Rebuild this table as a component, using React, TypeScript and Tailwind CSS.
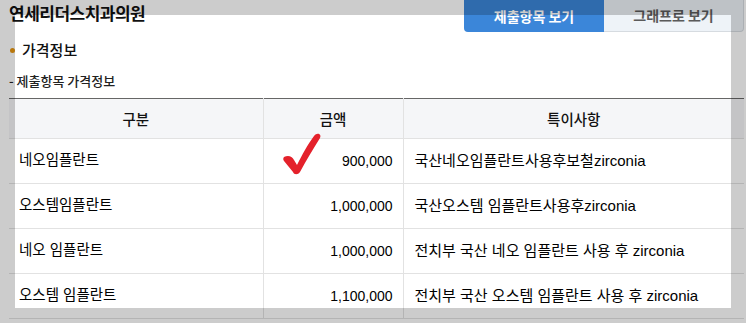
import React from "react";

const rows = [
  { name: "네오임플란트", price: "900,000", note: "국산네오임플란트사용후보철zirconia" },
  { name: "오스템임플란트", price: "1,000,000", note: "국산오스템 임플란트사용후zirconia" },
  { name: "네오 임플란트", price: "1,000,000", note: "전치부 국산 네오 임플란트 사용 후 zirconia" },
  { name: "오스템 임플란트", price: "1,100,000", note: "전치부 국산 오스템 임플란트 사용 후 zirconia" },
];

export default function App() {
  return (
    <div
      className="relative w-[746px] h-[323px] overflow-hidden bg-white text-[#222]"
      style={{ fontFamily: '"Noto Sans CJK KR", "Noto Sans", sans-serif' }}
    >
      <div className="pl-[9px]">
        <div className="flex items-start justify-between h-[32px]">
          <div className="pt-[1px] text-[17px] font-bold leading-[24px] tracking-[-0.5px] text-[#111]">
            연세리더스치과의원
          </div>
          <div className="flex mr-[2px]">
            <div className="w-[140px] h-[32px] flex items-center justify-center bg-[#3b86d9] text-white text-[14px] font-bold rounded-bl-[4px]">
              제출항목 보기
            </div>
            <div className="w-[140px] h-[32px] flex items-center justify-center bg-[#eef3f8] text-[#5a5a5a] text-[14px] font-bold border border-t-0 border-l-0 border-[#d6dbe0] rounded-br-[4px]">
              그래프로 보기
            </div>
          </div>
        </div>
        <div className="mt-[9px] flex items-center h-[18px]">
          <span className="w-[5px] h-[5px] rounded-full bg-[#e6950f] ml-[1px]" />
          <span className="ml-[7px] text-[15px] leading-[18px] text-[#111] font-medium">가격정보</span>
        </div>
        <div className="mt-[14px] text-[13px] leading-[16px] font-medium text-[#222]">- 제출항목 가격정보</div>
        <table
          className="mt-[9px] w-[735px] border-collapse border-t border-[#666] text-[14px]"
          style={{ fontFamily: '"Liberation Sans", "Noto Sans CJK KR", sans-serif' }}
        >
          <thead>
            <tr className="h-[40px] bg-[#f5f6f8]">
              <th className="w-[254px] font-medium text-[14.5px] text-center border-b border-r border-[#e2e2e2] text-[#111]" style={{ fontFamily: '"Noto Sans CJK KR", sans-serif' }}>구분</th>
              <th className="w-[140px] font-medium text-[14.5px] text-center border-b border-r border-[#e2e2e2] text-[#111]" style={{ fontFamily: '"Noto Sans CJK KR", sans-serif' }}>금액</th>
              <th className="font-medium text-[14.5px] text-center border-b border-[#e2e2e2] text-[#111]" style={{ fontFamily: '"Noto Sans CJK KR", sans-serif' }}>특이사항</th>
            </tr>
          </thead>
          <tbody>
            {rows.map((r) => (
              <tr key={r.name} className="h-[45px]">
                <td className="pl-[10px] text-[14.5px] border-b border-r border-[#e2e2e2] text-[#000]">{r.name}</td>
                <td className="pr-[10px] text-right border-b border-r border-[#e2e2e2] text-[#000]">{r.price}</td>
                <td className="pl-[11px] text-[15px] border-b border-[#e2e2e2] text-[#000]">{r.note}</td>
              </tr>
            ))}
          </tbody>
        </table>
      </div>

      <svg className="absolute left-[282px] top-[132px]" width="40" height="44" viewBox="0 0 40 44">
        <path
          d="M2 25 C6 23 10 24 12 28 L15 33 C20 23 26 12 32 4 C35 0 40 2 38 6 C31 17 24 29 18 40 C16 43 12 43 11 40 L2 29 C1 28 1 26 2 25 Z"
          fill="#e4212b"
        />
      </svg>

      <div className="absolute left-[15px] top-[15px] w-[716px] h-[293px] shadow-[0_0_0_1000px_rgba(0,0,0,0.2)] pointer-events-none" />
    </div>
  );
}
